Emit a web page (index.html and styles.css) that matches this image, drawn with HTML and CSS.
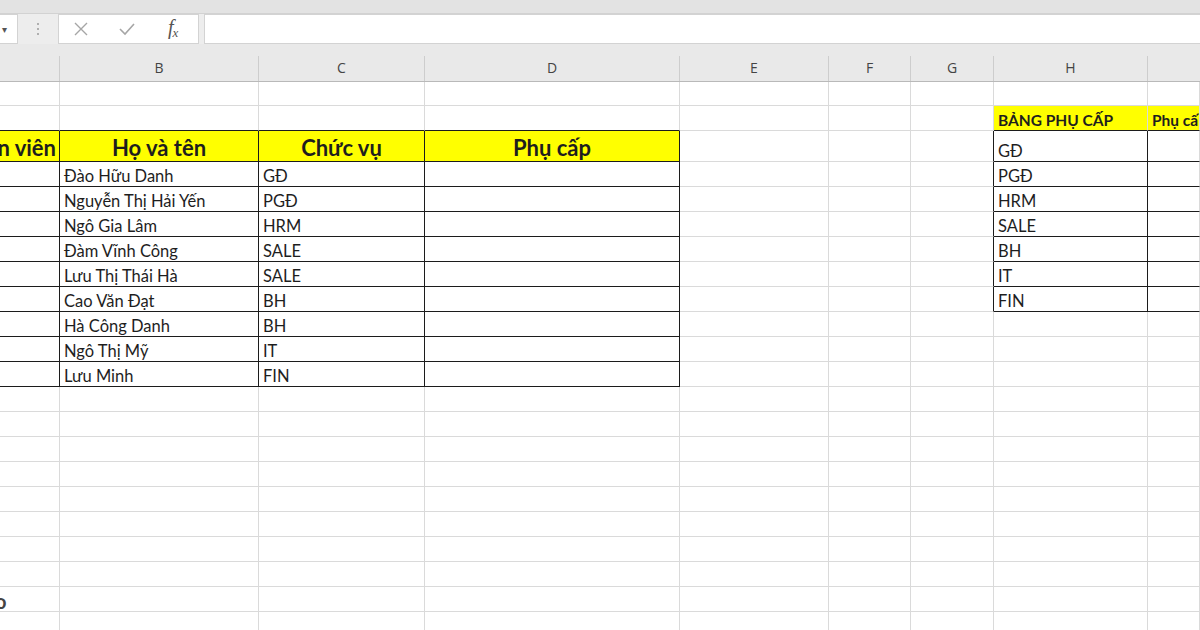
FILE: index.html
```html
<!DOCTYPE html>
<html lang="vi">
<head>
<meta charset="utf-8">
<title>Bảng phụ cấp</title>
<link rel="stylesheet" href="styles.css">
</head>
<body>
<div class="app">
  <div class="top-strip"></div>
  <div class="formula-bar">
    <div class="name-box"><span class="caret">▾</span></div>
    <div class="grip"><i></i><i></i><i></i></div>
    <div class="fx-box">
      <svg class="ico" width="16" height="16" viewBox="0 0 16 16"><path d="M2 2 L14 14 M14 2 L2 14" stroke="#a6a6a6" stroke-width="1.4" fill="none"/></svg>
      <svg class="ico" width="18" height="16" viewBox="0 0 18 16"><path d="M2 8 L7 13 L16 3" stroke="#a6a6a6" stroke-width="1.6" fill="none"/></svg>
      <span class="fx">f<sub>x</sub></span>
    </div>
    <div class="formula-input"></div>
  </div>
  <div class="col-headers">
    <div class="ch"></div>
    <div class="ch">B</div>
    <div class="ch">C</div>
    <div class="ch">D</div>
    <div class="ch">E</div>
    <div class="ch">F</div>
    <div class="ch">G</div>
    <div class="ch">H</div>
    <div class="ch last"></div>
  </div>
  <table class="sheet">
    <colgroup>
      <col class="w-a"><col class="w-b"><col class="w-c"><col class="w-d"><col class="w-e"><col class="w-f"><col class="w-g"><col class="w-h"><col class="w-i">
    </colgroup>
    <tbody>
      <tr class="r1"><td></td><td></td><td></td><td></td><td></td><td></td><td></td><td></td><td></td></tr>
      <tr class="r2"><td class="kb"></td><td class="kb"></td><td class="kb"></td><td class="kb"></td><td></td><td></td><td></td><td class="yel kb small-h">BẢNG PHỤ CẤP</td><td class="yel kb small-h">Phụ cấp</td></tr>
      <tr class="r3">
        <td class="yel kb kr big-h clip"><div class="endflex"><span>Mã nhân viên</span></div></td>
        <td class="yel kb kr big-h center">Họ và tên</td>
        <td class="yel kb kr big-h center">Chức vụ</td>
        <td class="yel kb kr big-h center">Phụ cấp</td>
        <td></td><td></td><td class="kr"></td><td class="kb kr">GĐ</td><td class="kb"></td>
      </tr>
      <tr><td class="kb kr"></td><td class="kb kr">Đào Hữu Danh</td><td class="kb kr">GĐ</td><td class="kb kr"></td><td></td><td></td><td class="kr"></td><td class="kb kr">PGĐ</td><td class="kb"></td></tr>
      <tr><td class="kb kr"></td><td class="kb kr">Nguyễn Thị Hải Yến</td><td class="kb kr">PGĐ</td><td class="kb kr"></td><td></td><td></td><td class="kr"></td><td class="kb kr">HRM</td><td class="kb"></td></tr>
      <tr><td class="kb kr"></td><td class="kb kr">Ngô Gia Lâm</td><td class="kb kr">HRM</td><td class="kb kr"></td><td></td><td></td><td class="kr"></td><td class="kb kr">SALE</td><td class="kb"></td></tr>
      <tr><td class="kb kr"></td><td class="kb kr">Đàm Vĩnh Công</td><td class="kb kr">SALE</td><td class="kb kr"></td><td></td><td></td><td class="kr"></td><td class="kb kr">BH</td><td class="kb"></td></tr>
      <tr><td class="kb kr"></td><td class="kb kr">Lưu Thị Thái Hà</td><td class="kb kr">SALE</td><td class="kb kr"></td><td></td><td></td><td class="kr"></td><td class="kb kr">IT</td><td class="kb"></td></tr>
      <tr><td class="kb kr"></td><td class="kb kr">Cao Văn Đạt</td><td class="kb kr">BH</td><td class="kb kr"></td><td></td><td></td><td class="kr"></td><td class="kb kr">FIN</td><td class="kb"></td></tr>
      <tr><td class="kb kr"></td><td class="kb kr">Hà Công Danh</td><td class="kb kr">BH</td><td class="kb kr"></td><td></td><td></td><td></td><td></td><td></td></tr>
      <tr><td class="kb kr"></td><td class="kb kr">Ngô Thị Mỹ</td><td class="kb kr">IT</td><td class="kb kr"></td><td></td><td></td><td></td><td></td><td></td></tr>
      <tr><td class="kb kr"></td><td class="kb kr">Lưu Minh</td><td class="kb kr">FIN</td><td class="kb kr"></td><td></td><td></td><td></td><td></td><td></td></tr>
      <tr><td></td><td></td><td></td><td></td><td></td><td></td><td></td><td></td><td></td></tr>
      <tr><td></td><td></td><td></td><td></td><td></td><td></td><td></td><td></td><td></td></tr>
      <tr><td></td><td></td><td></td><td></td><td></td><td></td><td></td><td></td><td></td></tr>
      <tr><td></td><td></td><td></td><td></td><td></td><td></td><td></td><td></td><td></td></tr>
      <tr><td></td><td></td><td></td><td></td><td></td><td></td><td></td><td></td><td></td></tr>
      <tr><td></td><td></td><td></td><td></td><td></td><td></td><td></td><td></td><td></td></tr>
      <tr><td></td><td></td><td></td><td></td><td></td><td></td><td></td><td></td><td></td></tr>
      <tr><td></td><td></td><td></td><td></td><td></td><td></td><td></td><td></td><td></td></tr>
      <tr><td class="clip"><span class="stray">o</span></td><td></td><td></td><td></td><td></td><td></td><td></td><td></td><td></td></tr>
      <tr><td></td><td></td><td></td><td></td><td></td><td></td><td></td><td></td><td></td></tr>
    </tbody>
  </table>
</div>
</body>
</html>
```

FILE: styles.css
```css
* { box-sizing: border-box; }
html, body { margin: 0; padding: 0; }
body {
  width: 1200px;
  height: 630px;
  overflow: hidden;
  background: #ffffff;
  font-family: Lato, "Open Sans", sans-serif;
}
.app { width: 1200px; height: 630px; overflow: hidden; }

.top-strip {
  height: 14px;
  background: #e3e3e3;
  border-bottom: 1px solid #d2d2d2;
}
.formula-bar {
  height: 30px;
  background: #ededed;
  display: flex;
  align-items: stretch;
}
.name-box {
  width: 18px;
  background: #fff;
  border: 1px solid #d3d3d3;
  border-left: none;
  display: flex;
  align-items: center;
  padding-left: 2px;
}
.caret { font-size: 10px; color: #555; line-height: 1; }
.grip {
  width: 40px;
  display: flex;
  flex-direction: column;
  align-items: center;
  justify-content: center;
  gap: 3px;
}
.grip i { width: 2px; height: 2px; background: #9a9a9a; display: block; border-radius: 1px; }
.fx-box {
  width: 141px;
  background: #fff;
  border: 1px solid #d3d3d3;
  display: flex;
  align-items: center;
  padding-left: 14px;
}
.fx-box .ico:first-child { margin-right: 29px; }
.fx-box .ico:nth-child(2) { margin-right: 32px; }
.fx {
  font-family: "Liberation Serif", serif;
  font-style: italic;
  font-size: 20px;
  color: #555;
  line-height: 1;
  margin-top: -2px;
}
.fx sub { font-size: 13px; vertical-align: -3px; margin-left: -1px; }
.formula-input {
  flex: 1;
  margin-left: 5px;
  background: #fff;
  border: 1px solid #d3d3d3;
  border-right: none;
}

.col-headers {
  height: 38px;
  background: #e9e9e9;
  border-bottom: 1px solid #b9b9b9;
  display: grid;
  grid-template-columns: 60px 199px 166px 255px 149px 82px 83px 154px 52px;
  align-items: end;
}
.ch {
  height: 25px;
  border-right: 1px solid #cdcdcd;
  font-family: "Open Sans", sans-serif;
  font-size: 14px;
  color: #444;
  text-align: center;
  line-height: 24px;
}
.ch.last { border-right: none; }

.sheet {
  border-collapse: separate;
  border-spacing: 0;
  table-layout: fixed;
  width: 1200px;
}
.w-a { width: 60px; }
.w-b { width: 199px; }
.w-c { width: 166px; }
.w-d { width: 255px; }
.w-e { width: 149px; }
.w-f { width: 82px; }
.w-g { width: 83px; }
.w-h { width: 154px; }
.w-i { width: 52px; }

.sheet tr { height: 25px; }
.sheet tr.r1 { height: 24px; }
.sheet tr.r3 { height: 31px; }
.sheet td {
  border-right: 1px solid #dadada;
  border-bottom: 1px solid #dadada;
  padding: 0 4px 0;
  vertical-align: bottom;
  font-size: 16.5px;
  line-height: 20px;
  color: #1e1e1e;
  white-space: nowrap;
  overflow: hidden;
}
.sheet td.kb { border-bottom-color: #1c1c1c; }
.sheet td.kr { border-right-color: #1c1c1c; }
.sheet td.yel { background: #ffff00; }
.sheet td.big-h {
  font-weight: 700;
  font-size: 22px;
  line-height: 26px;
  padding-bottom: 0;
}
.sheet td.small-h {
  font-weight: 700;
  font-size: 15.5px;
  line-height: 19px;
  padding-bottom: 0;
}
.sheet td.center { text-align: center; }
.sheet td.clip { padding-right: 3px; }
.endflex { display: flex; justify-content: flex-end; }
.stray {
  display: inline-block;
  margin-left: -9px;
  font-weight: 700;
  font-size: 20px;
  color: #444;
  position: relative;
  top: 2px;
}
```
